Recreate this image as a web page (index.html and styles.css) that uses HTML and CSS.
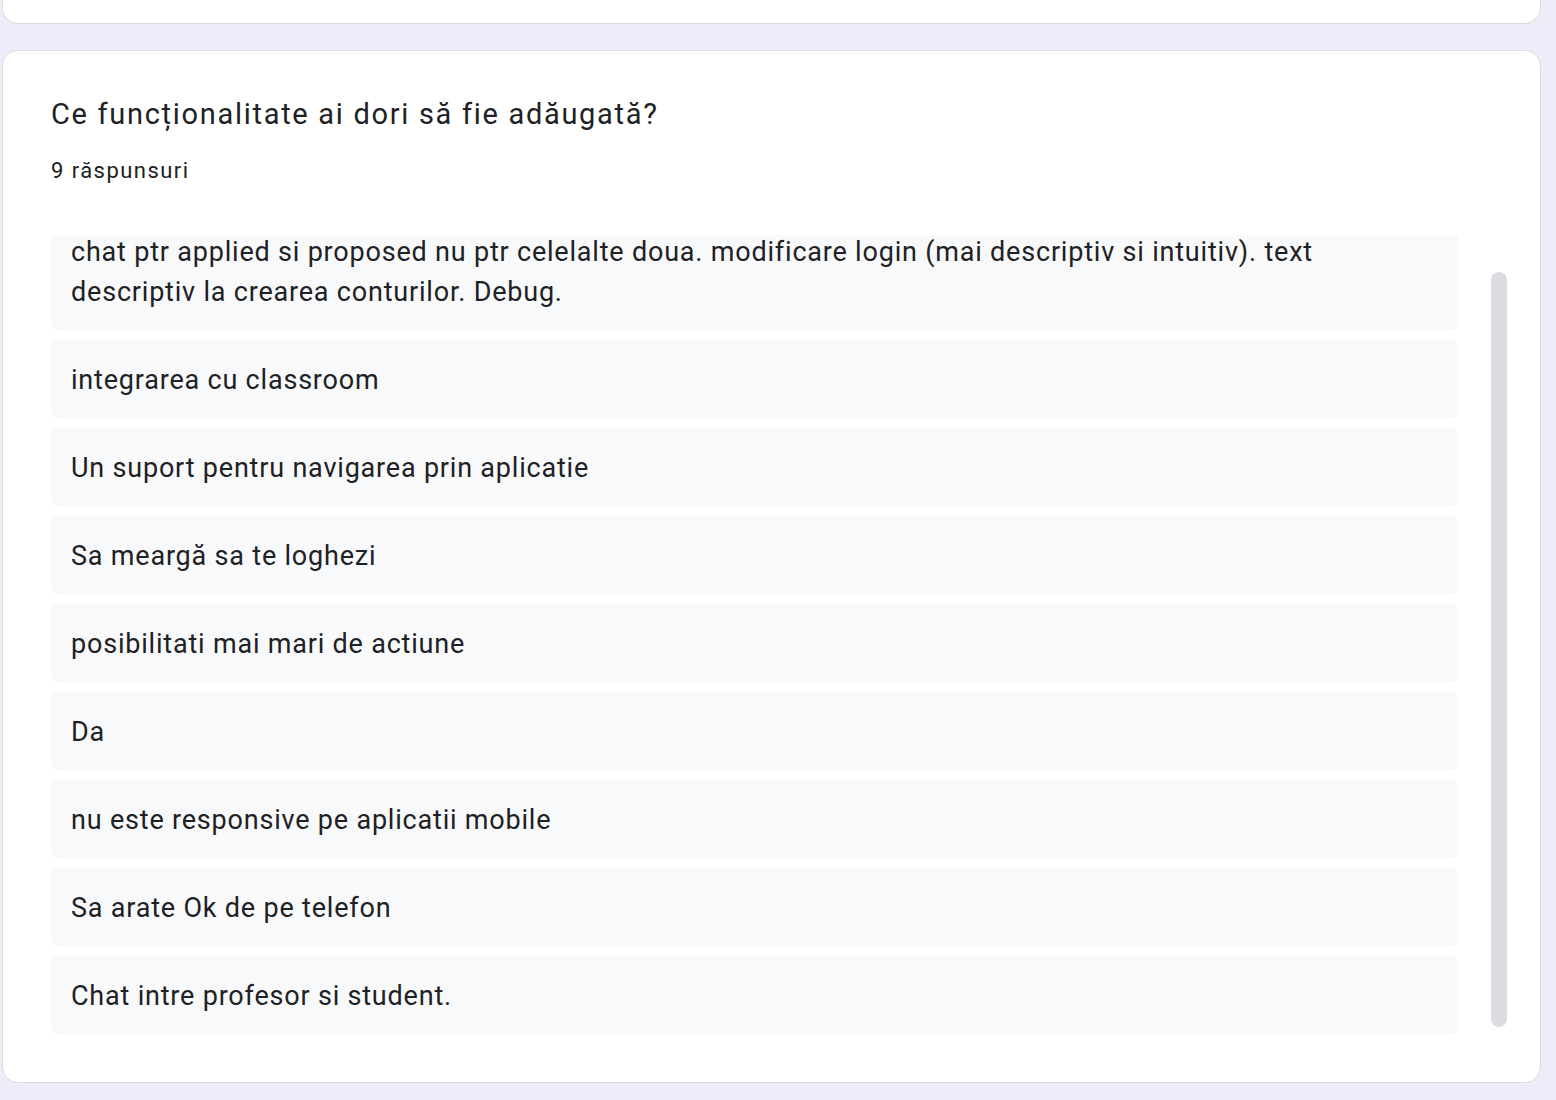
FILE: index.html
```html
<!DOCTYPE html>
<html lang="ro">
<head>
<meta charset="utf-8">
<title>Răspunsuri</title>
<link rel="stylesheet" href="styles.css">
</head>
<body>
<div class="page">
  <div class="card card-partial"></div>
  <div class="card">
    <div class="title">Ce funcționalitate ai dori să fie adăugată?</div>
    <div class="count">9 răspunsuri</div>
    <div class="scroll-row">
      <div class="list">
        <div class="item">chat ptr applied si proposed nu ptr celelalte doua. modificare login (mai descriptiv si intuitiv). text descriptiv la crearea conturilor. Debug.</div>
        <div class="item">integrarea cu classroom</div>
        <div class="item">Un suport pentru navigarea prin aplicatie</div>
        <div class="item">Sa meargă sa te loghezi</div>
        <div class="item">posibilitati mai mari de actiune</div>
        <div class="item">Da</div>
        <div class="item">nu este responsive pe aplicatii mobile</div>
        <div class="item">Sa arate Ok de pe telefon</div>
        <div class="item">Chat intre profesor si student.</div>
      </div>
      <div class="scrollbar"><div class="thumb"></div></div>
    </div>
  </div>
</div>
</body>
</html>
```

FILE: styles.css
```css
html, body {
  margin: 0;
  padding: 0;
  background: #f0ebf8;
}
body {
  font-family: Roboto, "Liberation Sans", Arial, sans-serif;
  color: #202124;
}
.page {
  display: flex;
  flex-direction: column;
  gap: 26px;
  padding: 0 16px 0 2px;
  width: 1539px;
}
.card {
  box-sizing: border-box;
  width: 1539px;
  background: #fff;
  border: 1px solid #dadce0;
  border-radius: 16px;
  padding: 45px 33px 47px 48px;
}
.card-partial {
  height: 24px;
  border-top: none;
  border-radius: 0 0 16px 16px;
  padding: 0;
}
.title {
  font-size: 29px;
  line-height: 36px;
  font-weight: 400;
  letter-spacing: 1.7px;
}
.count {
  margin-top: 25px;
  font-size: 22px;
  line-height: 28px;
  letter-spacing: 1.45px;
}
.scroll-row {
  margin-top: 50px;
  display: flex;
  gap: 33px;
  height: 800px;
}
.list {
  width: 1407px;
  height: 800px;
  overflow: hidden;
  display: flex;
  flex-direction: column;
  justify-content: flex-end;
  gap: 9px;
}
.item {
  flex: none;
  background: #f8f9fa;
  border-radius: 8px;
  padding: 20px 20px 19px 20px;
  font-size: 27px;
  line-height: 40px;
  letter-spacing: 0.8px;
}
.scrollbar {
  width: 16px;
  padding-top: 37px;
}
.thumb {
  width: 16px;
  height: 755px;
  background: #dadce0;
  border-radius: 8px;
}
```
